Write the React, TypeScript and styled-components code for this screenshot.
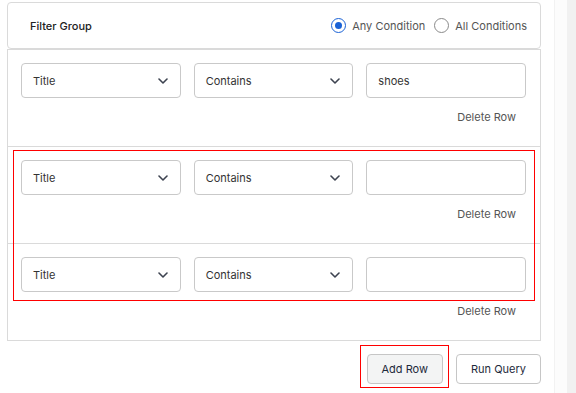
import styled, { createGlobalStyle } from 'styled-components';

const GlobalStyle = createGlobalStyle`
  html, body {
    margin: 0;
    padding: 0;
    background: #ffffff;
  }
  body {
    font-family: Inter, "Noto Sans", Arial, sans-serif;
    color: #222;
  }
  * {
    box-sizing: border-box;
  }
`;

const Screen = styled.div`
  display: flex;
  width: 576px;
  height: 393px;
  overflow: hidden;
`;

const Main = styled.main`
  width: 554px;
  padding: 2px 13px 0 7px;
`;

const ScrollTrack = styled.div`
  display: flex;
  width: 22px;
  border-left: 1px solid #f2f2f2;
  background: #fcfcfc;
`;

const ScrollThumb = styled.div`
  margin-left: auto;
  width: 9px;
  background: #f1f1f1;
`;

const HeaderCard = styled.div`
  display: flex;
  align-items: center;
  justify-content: space-between;
  height: 47px;
  padding: 0 13px 0 22px;
  border: 1px solid #dadada;
  border-radius: 4px;
`;

const GroupTitle = styled.span`
  font-size: 11px;
  font-weight: 500;
  color: #222;
`;

const RadioGroup = styled.div`
  display: flex;
  align-items: center;
  gap: 9px;
`;

const RadioLabel = styled.label`
  display: flex;
  align-items: center;
  gap: 6px;
  font-size: 11px;
  color: #555;
`;

const RadioDot = styled.span<{ $checked?: boolean }>`
  display: flex;
  align-items: center;
  justify-content: center;
  width: 15px;
  height: 15px;
  border-radius: 50%;
  border: ${({ $checked }) => ($checked ? '1.5px solid #1a62d6' : '1px solid #8a8a8a')};

  &::after {
    content: '';
    display: ${({ $checked }) => ($checked ? 'block' : 'none')};
    width: 7px;
    height: 7px;
    border-radius: 50%;
    background: #1a62d6;
  }
`;

const RowsCard = styled.div`
  position: relative;
  border: 1px solid #dadada;
  border-top: none;
`;

const Row = styled.div`
  padding: 13px 14px 14px 13px;
  border-top: 1px solid #dadada;
`;

const Fields = styled.div`
  display: grid;
  grid-template-columns: repeat(3, minmax(0, 1fr));
  gap: 13px;
`;

const Select = styled.div`
  display: flex;
  align-items: center;
  justify-content: space-between;
  height: 35px;
  padding: 0 12px 0 11px;
  border: 1px solid #c9c9c9;
  border-radius: 4px;
  font-size: 11px;
  color: #333;
`;

const TextField = styled.input`
  width: 100%;
  height: 35px;
  padding: 0 11px;
  border: 1px solid #c9c9c9;
  border-radius: 4px;
  font-family: inherit;
  font-size: 11px;
  color: #333;
  outline: none;
`;

const RowActions = styled.div`
  display: flex;
  justify-content: flex-end;
  margin-top: 4px;
`;

const DeleteButton = styled.button`
  height: 30px;
  padding: 0 10px;
  border: none;
  background: none;
  font-family: inherit;
  font-size: 11px;
  color: #555;
  cursor: pointer;
`;

const Highlight = styled.div`
  position: absolute;
  border: 1px solid #ff0000;
  pointer-events: none;
`;

const Footer = styled.div`
  display: flex;
  justify-content: flex-end;
  gap: 13px;
  margin-top: 13px;
`;

const ButtonWrap = styled.div`
  position: relative;
`;

const Button = styled.button<{ $muted?: boolean }>`
  height: 30px;
  padding: 0 14px;
  border: 1px solid #c6c6c6;
  border-radius: 4px;
  background: ${({ $muted }) => ($muted ? '#f3f4f4' : '#ffffff')};
  font-family: inherit;
  font-size: 11px;
  color: #1e2a3b;
  cursor: pointer;
`;

const Chevron = () => (
  <svg width="10" height="6" viewBox="0 0 10 6" fill="none">
    <path d="M1 1l4 4 4-4" stroke="#3d4350" strokeWidth="1.6" strokeLinecap="round" strokeLinejoin="round" />
  </svg>
);

const rows = [
  { field: 'Title', op: 'Contains', value: 'shoes' },
  { field: 'Title', op: 'Contains', value: '' },
  { field: 'Title', op: 'Contains', value: '' },
];

export default function App() {
  return (
    <>
      <GlobalStyle />
      <Screen>
        <Main>
          <HeaderCard>
            <GroupTitle>Filter Group</GroupTitle>
            <RadioGroup>
              <RadioLabel>
                <RadioDot $checked />
                Any Condition
              </RadioLabel>
              <RadioLabel>
                <RadioDot />
                All Conditions
              </RadioLabel>
            </RadioGroup>
          </HeaderCard>
          <RowsCard>
            {rows.map((row, i) => (
              <Row key={i}>
                <Fields>
                  <Select>
                    {row.field}
                    <Chevron />
                  </Select>
                  <Select>
                    {row.op}
                    <Chevron />
                  </Select>
                  <TextField defaultValue={row.value} />
                </Fields>
                <RowActions>
                  <DeleteButton>Delete Row</DeleteButton>
                </RowActions>
              </Row>
            ))}
            <Highlight style={{ left: 5, top: 101, width: 522, height: 151 }} />
          </RowsCard>
          <Footer>
            <ButtonWrap>
              <Button $muted>Add Row</Button>
              <Highlight style={{ left: -7, top: -9, width: 89, height: 43 }} />
            </ButtonWrap>
            <Button>Run Query</Button>
          </Footer>
        </Main>
        <ScrollTrack>
          <ScrollThumb />
        </ScrollTrack>
      </Screen>
    </>
  );
}
